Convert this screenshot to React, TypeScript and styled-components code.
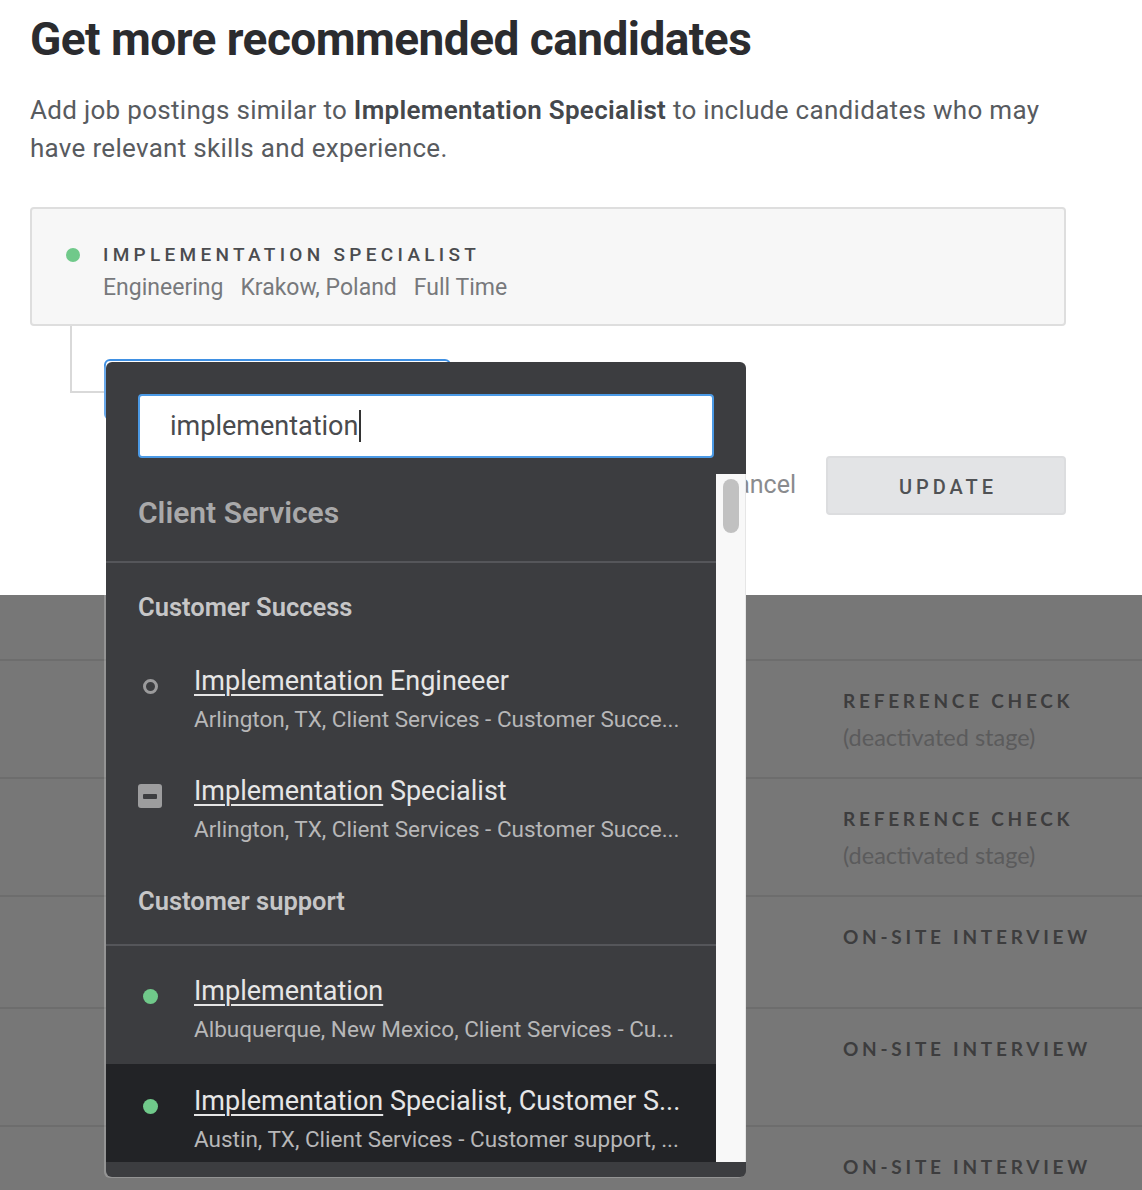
import React from "react";
import styled, { createGlobalStyle, css } from "styled-components";

const GlobalStyle = createGlobalStyle`
  html, body { margin: 0; padding: 0; background: #ffffff; }
  body { font-family: Roboto, "Noto Sans", sans-serif; -webkit-font-smoothing: antialiased; }
  * { box-sizing: border-box; }
`;

const Page = styled.div`
  width: 1142px;
  height: 1190px;
  overflow: hidden;
  display: flex;
  flex-direction: column;
`;

const TopSection = styled.section`
  height: 595px;
  flex: none;
  padding: 0 76px 0 30px;
  display: flex;
  flex-direction: column;
  background: #ffffff;
`;

const Heading = styled.h1`
  margin: 0;
  padding-top: 14px;
  font-size: 46px;
  line-height: 50px;
  font-weight: 700;
  color: #2b2c2f;
  letter-spacing: -0.55px;
`;

const Description = styled.p`
  margin: 27px 0 0;
  font-size: 26px;
  line-height: 38px;
  letter-spacing: 0.3px;
  color: #585b5f;
  strong { color: #45484c; font-weight: 600; }
`;

const JobCard = styled.div`
  margin-top: 40px;
  height: 119px;
  border: 2px solid #dedede;
  border-radius: 4px;
  background: #f7f7f7;
  padding: 31px 0 0 34px;
  display: grid;
  grid-template-columns: 14px 1fr;
  grid-template-rows: 30px 36px;
  align-content: start;
  column-gap: 23px;
  align-items: center;
`;

const Dot = styled.span<{ $size?: number }>`
  display: block;
  width: ${(p) => p.$size ?? 14}px;
  height: ${(p) => p.$size ?? 14}px;
  border-radius: 50%;
  background: #70c98a;
`;

const CardTitle = styled.div`
  font-size: 19px;
  line-height: 30px;
  font-weight: 500;
  letter-spacing: 4.3px;
  color: #4b4c4f;
  text-transform: uppercase;
`;

const CardMeta = styled.div`
  grid-column: 2;
  display: flex;
  gap: 17px;
  font-size: 23px;
  line-height: 36px;
  color: #77797c;
`;

const EditorArea = styled.div`
  display: flex;
  flex-direction: column;
`;

const SelectRow = styled.div`
  display: flex;
  align-items: flex-start;
`;

const Connector = styled.div`
  width: 35px;
  height: 67px;
  margin-left: 40px;
  border-left: 2px solid #d9d9d9;
  border-bottom: 2px solid #d9d9d9;
  flex: none;
`;

const SelectWrap = styled.div`
  position: relative;
  margin-top: 33px;
  margin-left: -1px;
`;

const SelectBox = styled.div`
  width: 347px;
  height: 61px;
  border: 2px solid #3f90e3;
  border-radius: 6px;
  background: #ffffff;
`;

const Dropdown = styled.div`
  position: absolute;
  top: 3px;
  left: 2px;
  width: 640px;
  height: 815px;
  z-index: 10;
  background: #3c3d40;
  border-radius: 6px;
  padding: 32px 0 15px;
  display: flex;
  flex-direction: column;
  box-shadow: -2px 1px 0 rgba(255, 255, 255, 0.22);
`;

const SearchBox = styled.div`
  margin: 0 32px;
  height: 64px;
  flex: none;
  background: #ffffff;
  border: 2px solid #4b9ae6;
  border-radius: 4px;
  display: flex;
  align-items: center;
  padding-left: 30px;
  font-size: 27px;
  color: #4a4b4e;
`;

const Caret = styled.span`
  display: inline-block;
  width: 2px;
  height: 32px;
  background: #333;
  margin-left: 1px;
`;

const ListArea = styled.div`
  margin-top: 16px;
  height: 688px;
  flex: none;
  display: flex;
  overflow: hidden;
`;

const ListContent = styled.div`
  flex: 1;
  min-width: 0;
  display: flex;
  flex-direction: column;
`;

const ScrollTrack = styled.div`
  width: 30px;
  flex: none;
  background: #f8f8f8;
  border-right: 1px solid #e6e6e6;
  padding: 5px 0 0 7px;
`;

const ScrollThumb = styled.div`
  width: 16px;
  height: 54px;
  border-radius: 8px;
  background: #c1c1c1;
`;

const GroupTitle = styled.div`
  padding: 22px 32px 31px;
  font-size: 30px;
  line-height: 34px;
  font-weight: 600;
  color: #a9a9aa;
  border-bottom: 2px solid #55565a;
`;

const SubHeader = styled.div<{ $top: number; $bottom: number; $divider?: boolean }>`
  padding: ${(p) => p.$top}px 32px ${(p) => p.$bottom}px;
  font-size: 25.5px;
  line-height: 34px;
  font-weight: 600;
  color: #c6c6c7;
  ${(p) =>
    p.$divider &&
    css`
      border-bottom: 2px solid #55565a;
      margin-bottom: 8px;
    `}
`;

const Item = styled.div<{ $active?: boolean }>`
  height: 110px;
  flex: none;
  padding: 20px 30px 0 32px;
  display: grid;
  grid-template-columns: 56px minmax(0, 1fr);
  grid-template-rows: 34px 42px;
  background: ${(p) => (p.$active ? "#222326" : "transparent")};
`;

const IconCell = styled.div`
  height: 34px;
  padding-top: 10px;
  display: flex;
  align-items: center;
`;

const IconSlot = styled.div`
  width: 24px;
  height: 24px;
  display: flex;
  align-items: center;
  justify-content: center;
`;

const RingIcon = styled.span`
  width: 15px;
  height: 15px;
  border-radius: 50%;
  border: 3px solid #9b9b9c;
`;

const MinusIcon = styled.span`
  width: 24px;
  height: 24px;
  border-radius: 3px;
  background: #9d9d9e;
  display: flex;
  align-items: center;
  justify-content: center;
  &::after {
    content: "";
    width: 14px;
    height: 5px;
    border-radius: 1px;
    background: #3c3d40;
  }
`;

const ItemTitle = styled.div`
  font-size: 27px;
  line-height: 34px;
  color: #e6e6e6;
  white-space: nowrap;
  overflow: hidden;
  text-overflow: ellipsis;
  u {
    text-decoration: underline;
    text-decoration-thickness: 2px;
    text-underline-offset: 4px;
  }
`;

const ItemMeta = styled.div`
  grid-column: 2;
  font-size: 22.5px;
  line-height: 42px;
  color: #b7b7b8;
  white-space: nowrap;
  overflow: hidden;
  text-overflow: ellipsis;
`;

const ButtonRow = styled.div`
  margin-top: 36px;
  display: flex;
  justify-content: flex-end;
  align-items: center;
  gap: 30px;
`;

const CancelButton = styled.button`
  border: none;
  background: none;
  padding: 0;
  font-family: inherit;
  font-size: 25px;
  color: #8a8b8e;
  margin-top: -2px;
`;

const UpdateButton = styled.button`
  width: 240px;
  height: 59px;
  border: 2px solid #dcdddf;
  border-radius: 4px;
  background: #e3e4e6;
  font-family: inherit;
  font-size: 20px;
  font-weight: 500;
  letter-spacing: 4px;
  color: #505255;
  padding: 2px 0 0 4px;
`;

const Backdrop = styled.section`
  flex: 1;
  background: #777777;
  display: flex;
  flex-direction: column;
  font-family: Lato, "Noto Sans", sans-serif;
`;

const HeaderRow = styled.div`
  height: 64px;
  flex: none;
`;

const StageRow = styled.div<{ $h: number }>`
  height: ${(p) => p.$h}px;
  flex: none;
  border-top: 2px solid #6d6d6d;
  padding: 25px 0 0 843px;
`;

const StageName = styled.div`
  font-size: 19px;
  line-height: 30px;
  font-weight: 700;
  letter-spacing: 3.75px;
  color: #3d3d3e;
`;

const StageNote = styled.div`
  font-size: 23.5px;
  line-height: 42px;
  color: #5b5b5c;
`;

type Job = {
  icon: "ring" | "minus" | "dot";
  rest: string;
  meta: string;
  active?: boolean;
};

const successJobs: Job[] = [
  { icon: "ring", rest: " Engineeer", meta: "Arlington, TX, Client Services - Customer Succe..." },
  { icon: "minus", rest: " Specialist", meta: "Arlington, TX, Client Services - Customer Succe..." },
];

const supportJobs: Job[] = [
  { icon: "dot", rest: "", meta: "Albuquerque, New Mexico, Client Services - Cu..." },
  {
    icon: "dot",
    rest: " Specialist, Customer S...",
    meta: "Austin, TX, Client Services - Customer support, ...",
    active: true,
  },
];

const stages = [
  { name: "REFERENCE CHECK", note: "(deactivated stage)", h: 118 },
  { name: "REFERENCE CHECK", note: "(deactivated stage)", h: 118 },
  { name: "ON-SITE INTERVIEW", h: 112 },
  { name: "ON-SITE INTERVIEW", h: 118 },
  { name: "ON-SITE INTERVIEW", h: 118 },
];

function JobIcon({ kind }: { kind: Job["icon"] }) {
  return (
    <IconSlot>
      {kind === "ring" && <RingIcon />}
      {kind === "minus" && <MinusIcon />}
      {kind === "dot" && <Dot $size={15} />}
    </IconSlot>
  );
}

function JobItem({ job }: { job: Job }) {
  return (
    <Item $active={job.active}>
      <IconCell>
        <JobIcon kind={job.icon} />
      </IconCell>
      <ItemTitle>
        <u>Implementation</u>
        {job.rest}
      </ItemTitle>
      <ItemMeta>{job.meta}</ItemMeta>
    </Item>
  );
}

export default function App() {
  return (
    <Page>
      <GlobalStyle />
      <TopSection>
        <Heading>Get more recommended candidates</Heading>
        <Description>
          Add job postings similar to <strong>Implementation Specialist</strong> to include candidates who may
          <br />
          have relevant skills and experience.
        </Description>
        <JobCard>
          <Dot />
          <CardTitle>Implementation Specialist</CardTitle>
          <CardMeta>
            <span>Engineering</span>
            <span>Krakow, Poland</span>
            <span>Full Time</span>
          </CardMeta>
        </JobCard>
        <EditorArea>
          <SelectRow>
            <Connector />
            <SelectWrap>
              <SelectBox />
              <Dropdown>
                <SearchBox>
                  implementation
                  <Caret />
                </SearchBox>
                <ListArea>
                  <ListContent>
                    <GroupTitle>Client Services</GroupTitle>
                    <SubHeader $top={27} $bottom={20}>
                      Customer Success
                    </SubHeader>
                    {successJobs.map((j, i) => (
                      <JobItem key={"s" + i} job={j} />
                    ))}
                    <SubHeader $top={20} $bottom={26} $divider>
                      Customer support
                    </SubHeader>
                    {supportJobs.map((j, i) => (
                      <JobItem key={"p" + i} job={j} />
                    ))}
                  </ListContent>
                  <ScrollTrack>
                    <ScrollThumb />
                  </ScrollTrack>
                </ListArea>
              </Dropdown>
            </SelectWrap>
          </SelectRow>
          <ButtonRow>
            <CancelButton>Cancel</CancelButton>
            <UpdateButton>UPDATE</UpdateButton>
          </ButtonRow>
        </EditorArea>
      </TopSection>
      <Backdrop>
        <HeaderRow />
        {stages.map((s, i) => (
          <StageRow key={i} $h={s.h}>
            <StageName>{s.name}</StageName>
            {s.note && <StageNote>{s.note}</StageNote>}
          </StageRow>
        ))}
      </Backdrop>
    </Page>
  );
}
